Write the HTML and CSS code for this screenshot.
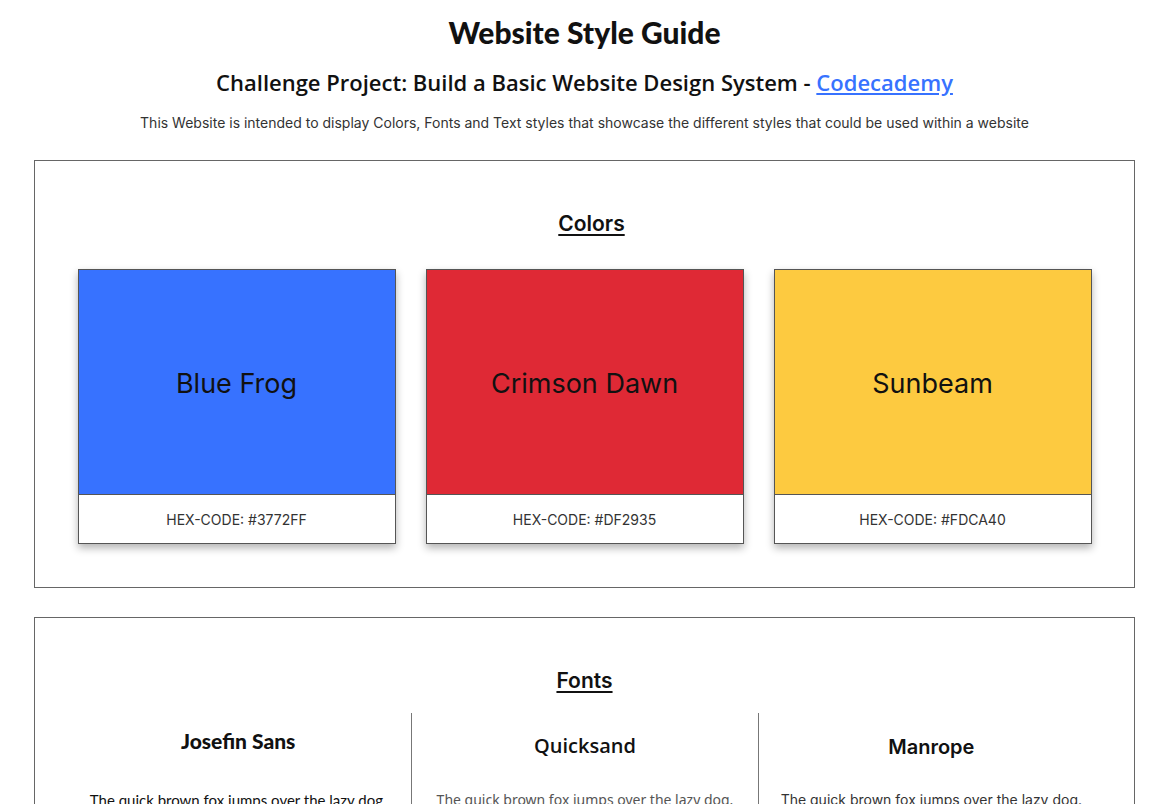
FILE: index.html
```html
<!DOCTYPE html>
<html lang="en">
<head>
<meta charset="utf-8">
<title>Website Style Guide</title>
<link rel="stylesheet" href="styles.css">
</head>
<body>
<header class="intro">
  <h1 class="title">Website Style Guide</h1>
  <h2 class="subtitle">Challenge Project: Build a Basic Website Design System - <a href="#" class="link">Codecademy</a></h2>
  <p class="lead">This Website is intended to display Colors, Fonts and Text styles that showcase the different styles that could be used within a website</p>
</header>

<section class="panel colors-panel">
  <h3 class="panel-title colors-title">Colors</h3>
  <div class="swatches">
    <div class="swatch">
      <div class="swatch-color blue">Blue Frog</div>
      <div class="swatch-code">HEX-CODE: #3772FF</div>
    </div>
    <div class="swatch">
      <div class="swatch-color crimson">Crimson Dawn</div>
      <div class="swatch-code">HEX-CODE: #DF2935</div>
    </div>
    <div class="swatch">
      <div class="swatch-color sun">Sunbeam</div>
      <div class="swatch-code">HEX-CODE: #FDCA40</div>
    </div>
  </div>
</section>

<section class="panel fonts-panel">
  <h3 class="panel-title">Fonts</h3>
  <div class="font-cols">
    <div class="font-col">
      <h4 class="font-name josefin">Josefin Sans</h4>
      <p class="font-sample josefin-s">The quick brown fox jumps over the lazy dog.</p>
    </div>
    <div class="font-col">
      <h4 class="font-name quick">Quicksand</h4>
      <p class="font-sample quick-s">The quick brown fox jumps over the lazy dog.</p>
    </div>
    <div class="font-col">
      <h4 class="font-name manrope">Manrope</h4>
      <p class="font-sample manrope-s">The quick brown fox jumps over the lazy dog.</p>
    </div>
  </div>
</section>
</body>
</html>
```

FILE: styles.css
```css
html, body {
  margin: 0;
  padding: 0;
  background: #fff;
}
body {
  font-family: "Inter", "Roboto", sans-serif;
  color: #111;
  padding: 0 35px 40px 34px;
}
.intro {
  text-align: center;
  padding-top: 14px;
}
.title {
  font-family: "Lato", "DejaVu Sans", sans-serif;
  font-weight: 900;
  font-size: 30px;
  letter-spacing: 0;
  margin: 0;
  line-height: 36px;
}
.subtitle {
  font-family: "Open Sans", sans-serif;
  font-weight: 600;
  font-size: 22px;
  margin: 18px 0 0;
  line-height: 28px;
}
.link {
  color: #3772ff;
  text-decoration: underline;
}
.lead {
  font-family: "Inter", sans-serif;
  font-size: 14px;
  color: #333;
  margin: 18px 0 0;
  line-height: 18px;
}
.panel {
  border: 1px solid #666;
  margin-top: 29px;
  padding: 50px 30px 43px;
}
.colors-panel {
  margin-top: 28px;
}
.panel-title {
  text-align: center;
  font-family: "Inter", sans-serif;
  font-weight: 600;
  font-size: 21px;
  text-decoration: underline;
  text-underline-offset: 3px;
  margin: 0;
  line-height: 26px;
}
.colors-title {
  padding-left: 14px;
}
.swatches {
  display: flex;
  justify-content: center;
  gap: 30px;
  margin-top: 32px;
}
.swatch {
  width: 316px;
  border: 1px solid #555;
  box-shadow: 0 4px 8px rgba(0,0,0,0.3);
  display: flex;
  flex-direction: column;
}
.swatch-color {
  display: flex;
  align-items: center;
  justify-content: center;
  font-family: "Inter", sans-serif;
  font-weight: 400;
  font-size: 27px;
  color: #111;
  border-bottom: 1px solid #555;
  padding-top: 3px;
  box-sizing: border-box;
  height: 225px;
}
.blue { background: #3772ff; }
.crimson { background: #df2935; }
.sun { background: #fdca40; }
.swatch-code {
  height: 48px;
  display: flex;
  align-items: center;
  justify-content: center;
  font-family: "Inter", sans-serif;
  font-weight: 400;
  font-size: 14px;
  color: #333;
}
.font-cols {
  display: grid;
  grid-template-columns: repeat(3, 1fr);
  margin-top: 19px;
}
.font-col {
  text-align: center;
  padding-top: 16px;
}
.font-col + .font-col {
  border-left: 1px solid #777;
}
.font-name {
  margin: 0;
  font-size: 20px;
  line-height: 24px;
}
.josefin {
  font-family: "Lato", sans-serif;
  font-weight: 900;
  font-size: 21px;
}
.quick {
  font-family: "Open Sans", sans-serif;
  font-weight: 600;
  margin-top: 5px;
}
.manrope {
  font-family: "Inter", sans-serif;
  font-weight: 600;
  margin-top: 6px;
}
.font-sample {
  font-size: 14px;
  line-height: 18px;
}
.josefin-s { font-family: "Lato", sans-serif; font-weight: 400; font-size: 15px; color: #111; margin: 38px 0 0; }
.quick-s { font-family: "Noto Sans", sans-serif; font-weight: 400; color: #555; margin: 33px 0 0; }
.manrope-s { font-family: "Inter", sans-serif; font-weight: 400; color: #333; margin: 32px 0 0; }
```
